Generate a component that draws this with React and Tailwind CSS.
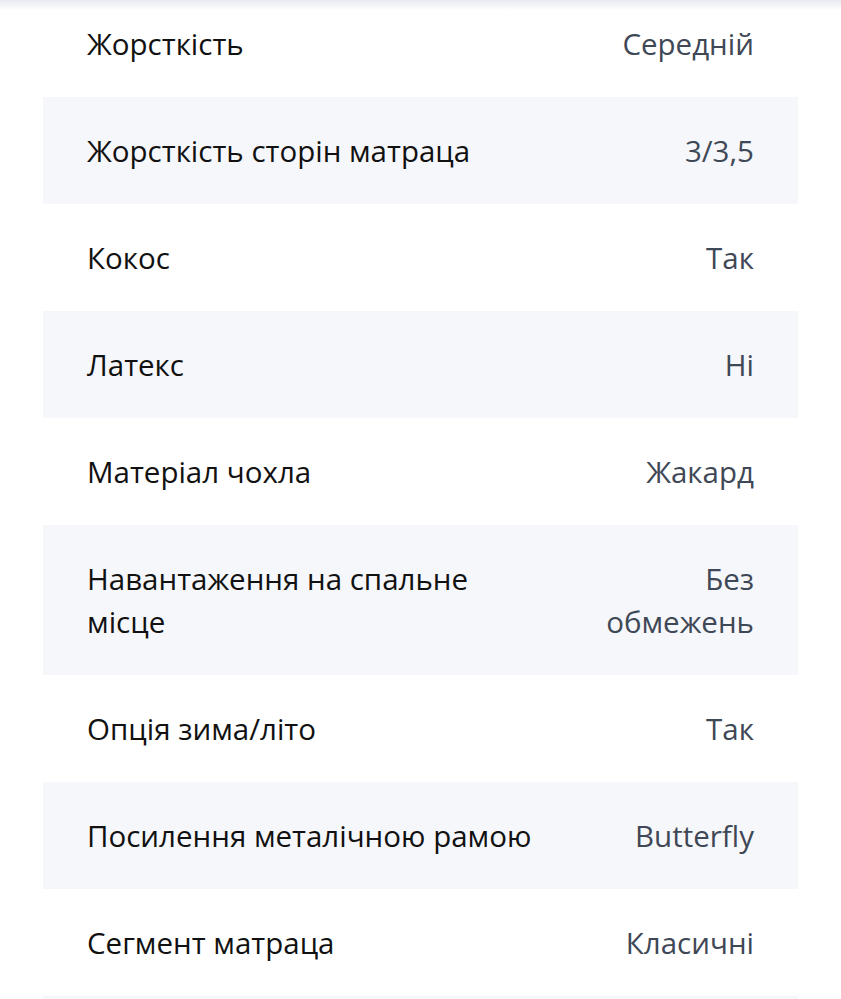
const specs = [
  { label: "Жорсткість", value: "Середній" },
  { label: "Жорсткість сторін матраца", value: "3/3,5" },
  { label: "Кокос", value: "Так" },
  { label: "Латекс", value: "Ні" },
  { label: "Матеріал чохла", value: "Жакард" },
  { label: "Навантаження на спальне місце", value: "Без обмежень", wrap: true },
  { label: "Опція зима/літо", value: "Так" },
  { label: "Посилення металічною рамою", value: "Butterfly" },
  { label: "Сегмент матраца", value: "Класичні" },
];

export default function App() {
  return (
    <div className="relative h-[999px] overflow-hidden bg-white" style={{ fontFamily: '"Open Sans", "Noto Sans", sans-serif' }}>
      {/* shadow of the sticky header above */}
      <div className="absolute top-0 left-0 right-0 h-[10px] bg-gradient-to-b from-[#e9eaf0] to-white" />

      <div className="mx-[43px] -mt-[10px]">
        {specs.map((row, i) => (
          <div
            key={i}
            className={`flex justify-between gap-8 px-[44px] py-[32px] text-[29.5px] leading-[43px] ${
              i % 2 === 1 ? "bg-[#f6f7fa]" : "bg-white"
            }`}
          >
            <span className={`text-[#111111] ${row.wrap ? "max-w-[420px]" : ""}`}>{row.label}</span>
            <span className={`text-right text-[#3f4856] ${row.wrap ? "max-w-[170px]" : ""}`}>{row.value}</span>
          </div>
        ))}
        {/* next row, only its top edge is in view */}
        <div className="h-[107px] bg-[#f6f7fa]" />
      </div>
    </div>
  );
}
